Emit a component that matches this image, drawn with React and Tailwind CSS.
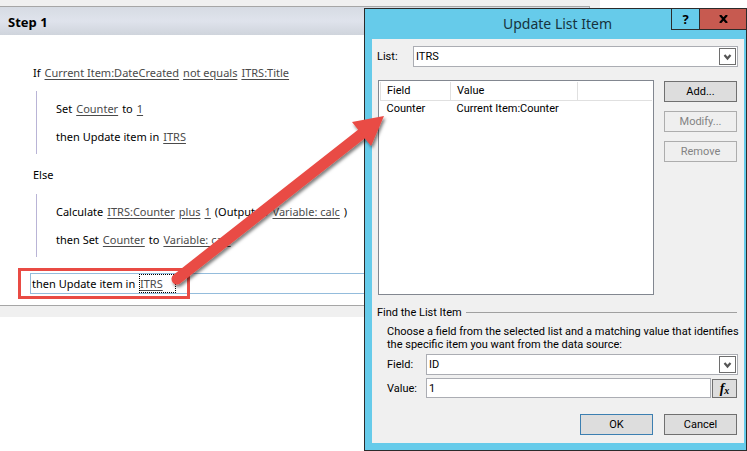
import React from "react";

function Link({ children }) {
  return (
    <a href="#" className="text-[#4a4a4a] underline decoration-1 underline-offset-2">
      {children}
    </a>
  );
}

function Line({ children }) {
  return <p className="flex h-7 items-center gap-1 whitespace-nowrap leading-[15px]">{children}</p>;
}

function Block({ children }) {
  return <div className="ml-9 h-[63px] border-l border-[#b9b4d6] pl-[19px] pt-[3px]">{children}</div>;
}

function Chevron() {
  return (
    <span className="pointer-events-none absolute right-[1px] top-[1px] flex h-[17px] w-[17px] items-center justify-center border border-[#6e6e6e] bg-white">
      <svg width="9" height="8" viewBox="0 0 9 8" fill="none" stroke="#555" strokeWidth="2.2">
        <path d="M1.500 2 4.500 5.500 7.500 2" />
      </svg>
    </span>
  );
}

function Combo({ id, value }) {
  return (
    <div className="relative h-[21px] flex-1 border border-[#abadb3] bg-white">
      <select id={id} defaultValue={value} className="block h-full w-full appearance-none bg-transparent px-[2px] text-[11px] leading-[18px] outline-none">
        <option>{value}</option>
      </select>
      <Chevron />
    </div>
  );
}

function PushButton({ children, tone = "border-[#707070] bg-[#dddddd]", disabled }) {
  return (
    <button disabled={disabled} className={`flex h-[21px] w-[73px] items-center justify-center border ${tone}`}>
      {children}
    </button>
  );
}

function Workflow() {
  return (
    <main className="w-[600px] bg-[#f0f0f0] pb-[11px] pr-[10px] pt-[6px] text-[11px]">
      <section className="border-b border-r border-t border-[#a6a6a6] bg-white">
        <h1 className="flex h-7 items-center bg-linear-to-b from-[#d6dbe3] via-[#dfe3ec] to-[#cfd4dc] px-2 pt-[3px] text-[13px] font-bold">Step 1</h1>
        <div className="pl-[33px] pt-[23px]">
          <Line>If <Link>Current Item:DateCreated</Link> <Link>not equals</Link> <Link>ITRS:Title</Link></Line>
        </div>
        <div className="pt-[5px]">
          <Block>
            <Line>Set <Link>Counter</Link> to <Link>1</Link></Line>
            <Line>then Update item in <Link>ITRS</Link></Line>
          </Block>
        </div>
        <div className="py-[6px] pl-[33px]">
          <Line>Else</Line>
        </div>
        <Block>
          <Line>Calculate <Link>ITRS:Counter</Link> <Link>plus</Link> <Link>1</Link> (Output to <Link>Variable: calc</Link> )</Line>
          <Line>then Set <Link>Counter</Link> to <Link>Variable: calc</Link></Line>
        </Block>
        <div className="mb-[11px] ml-[30px] mt-4 flex h-[21px] items-center gap-[1px] border border-[#94bcdc] pl-[1px] leading-[15px]">
          <span className="w-[106px] whitespace-nowrap">then Update item in</span>
          <span className="flex h-[19px] w-[37px] items-center border border-dotted border-black"><Link>ITRS</Link></span>
        </div>
      </section>
    </main>
  );
}

function Dialog() {
  return (
    <div role="dialog" aria-labelledby="dialog-title" className="absolute left-[364px] top-2 w-[383px] border border-[#2b2b2b] bg-[#66cbea] pb-[7px] pl-[7px] pr-[2px] font-['Roboto',sans-serif] text-[11px] leading-[13px]">
      <header className="-mr-[3px] flex h-[30px] items-start">
        <h2 id="dialog-title" className="flex-1 pl-[131px] pt-1 font-['Noto_Sans',sans-serif] text-[14px] leading-[22px] text-[#16333d]">Update List Item</h2>
        <button className="-mt-px flex h-[22px] w-[29px] items-center justify-center border border-[#2b2b2b] font-['Noto_Sans',sans-serif] text-[13px] font-bold">?</button>
        <button aria-label="Close" className="-ml-px -mt-px flex h-[22px] w-[48px] items-center justify-center border border-[#2b2b2b] bg-[#c75a50]">
          <svg width="9" height="8" viewBox="0 0 9 8" stroke="#000" strokeWidth="2.2"><path d="M1 0 8 8M8 0 1 8" /></svg>
        </button>
      </header>
      <div className="bg-[#f0f0f0] px-[5px] pb-2 pt-[7px]">
        <div className="flex items-center pr-[1px]">
          <label htmlFor="list" className="w-9">List:</label>
          <Combo id="list" value="ITRS" />
        </div>
        <div className="mt-[13px] flex justify-between pl-[1px] pr-[2px]">
          <div className="h-[215px] w-[276px] border border-[#828790] bg-white p-[1px]">
            <table className="w-full table-fixed text-left">
              <thead>
                <tr className="h-[18px] border-b border-[#e0e0e0]">
                  <th className="w-[70px] border-x border-[#e0e0e0] pl-[6px] font-normal">Field</th>
                  <th className="w-[127px] border-r border-[#e0e0e0] pl-[6px] font-normal">Value</th>
                  <th></th>
                </tr>
              </thead>
              <tbody>
                <tr className="h-[17px]">
                  <td className="pl-[6px]">Counter</td>
                  <td className="pl-[6px]">Current Item:Counter</td>
                  <td></td>
                </tr>
              </tbody>
            </table>
          </div>
          <div className="flex flex-col gap-[9px] pt-px">
            <PushButton>Add...</PushButton>
            <PushButton disabled tone="border-[#adadad] bg-[#efefef] text-[#838383]">Modify...</PushButton>
            <PushButton disabled tone="border-[#adadad] bg-[#efefef] text-[#838383]">Remove</PushButton>
          </div>
        </div>
        <fieldset className="mt-[11px]">
          <legend className="flex w-full items-center gap-1 pr-[2px] after:h-px after:flex-1 after:bg-[#a0a0a0]">Find the List Item</legend>
          <div className="pl-[10px] pt-[6px]">
            <p className="whitespace-nowrap">Choose a field from the selected list and a matching value that identifies<br />the specific item you want from the data source:</p>
            <div className="mt-[3px] flex items-center pr-[1px]">
              <label htmlFor="field" className="w-[39px]">Field:</label>
              <Combo id="field" value="ID" />
            </div>
            <div className="mt-[3px] flex items-center pr-[2px]">
              <label htmlFor="value" className="w-[39px]">Value:</label>
              <input id="value" defaultValue="1" className="h-5 min-w-0 flex-1 border border-[#abadb3] bg-white px-[2px] outline-none" />
              <button aria-label="Define workflow lookup" className="ml-px flex h-[19px] w-[25px] items-center justify-center border border-[#707070] bg-[#dddddd] font-['Liberation_Serif',serif] text-[14px] font-bold italic">
                f<span className="pt-1 text-[10px]">x</span>
              </button>
            </div>
          </div>
        </fieldset>
        <footer className="mt-4 flex justify-end gap-[11px] pr-[2px]">
          <PushButton tone="border-[#3c7fb1] bg-[#dddddd]">OK</PushButton>
          <PushButton>Cancel</PushButton>
        </footer>
      </div>
    </div>
  );
}

function Annotation() {
  return (
    <svg aria-hidden="true" className="pointer-events-none absolute left-0 top-0" width="400" height="310" viewBox="0 0 400 310">
      <defs>
        <filter id="shadow" x="-10%" y="-10%" width="120%" height="120%">
          <feDropShadow dx="1.5" dy="2.5" stdDeviation="1.5" floodColor="#000" floodOpacity="0.5" />
        </filter>
      </defs>
      <rect x="19.500" y="269.500" width="169" height="28" fill="none" stroke="#e94b44" strokeWidth="3" />
      <g filter="url(#shadow)" fill="#e94b44">
        <path d="M177 279 364 132" stroke="#e94b44" strokeWidth="11" strokeLinecap="round" />
        <path d="M384 116 352 122 371 146Z" />
      </g>
    </svg>
  );
}

export default function App() {
  return (
    <div className="relative min-h-screen overflow-hidden bg-white font-['Noto_Sans',sans-serif] text-black">
      <Workflow />
      <Dialog />
      <Annotation />
    </div>
  );
}
